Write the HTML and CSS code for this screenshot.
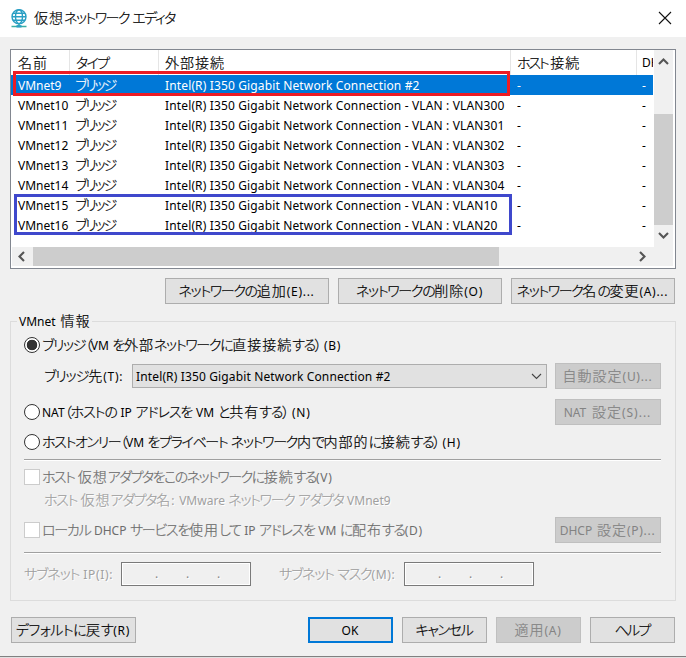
FILE: index.html
```html
<!DOCTYPE html>
<html lang="ja">
<head>
<meta charset="utf-8">
<title>仮想ネットワーク エディタ</title>
<link rel="stylesheet" href="styles.css">
</head>
<body>
<div class="window">
  <header class="titlebar">
    <svg class="app-icon" width="18" height="20" viewBox="0 0 18 20" fill="none" stroke="#2a9fc4" stroke-width="1.4"><circle cx="9" cy="7.700" r="7"/><ellipse cx="9" cy="7.700" rx="3.500" ry="7"/><path d="M2 7.700h14M3 4.200h12M3 11.200h12"/><path d="M9 15v3M1.500 17.500h15" stroke="#3aaea4" stroke-width="1.400"/><path d="M6.500 17.300h5" stroke="#2a9fc4" stroke-width="2.400"/></svg>
    <span class="t s15 title"><i>仮想</i>ネットワーク エディタ</span>
    <svg class="close" width="14" height="14" viewBox="0 0 14 14" stroke="#111" stroke-width="1.1"><path d="M1 1l12 12M13 1L1 13"/></svg>
  </header>
  <main class="body">
    <section class="list">
      <div class="table">
        <div class="row head"><span class="t"><i>名前</i></span><span class="t s17">タイプ</span><span class="t"><i>外部接続</i></span><span class="t s21">ホスト <i>接続</i></span><span>DH</span></div>
        <div class="row selected"><span>VMnet9</span><span class="t s21">ブリッジ</span><span class="wide">Intel(R) I350 Gigabit Network Connection #2</span><span>-</span><span>-</span></div>
        <div class="row"><span>VMnet10</span><span class="t s21">ブリッジ</span><span class="wide">Intel(R) I350 Gigabit Network Connection - VLAN : VLAN300</span><span>-</span><span>-</span></div>
        <div class="row"><span>VMnet11</span><span class="t s21">ブリッジ</span><span class="wide">Intel(R) I350 Gigabit Network Connection - VLAN : VLAN301</span><span>-</span><span>-</span></div>
        <div class="row"><span>VMnet12</span><span class="t s21">ブリッジ</span><span class="wide">Intel(R) I350 Gigabit Network Connection - VLAN : VLAN302</span><span>-</span><span>-</span></div>
        <div class="row"><span>VMnet13</span><span class="t s21">ブリッジ</span><span class="wide">Intel(R) I350 Gigabit Network Connection - VLAN : VLAN303</span><span>-</span><span>-</span></div>
        <div class="row"><span>VMnet14</span><span class="t s21">ブリッジ</span><span class="wide">Intel(R) I350 Gigabit Network Connection - VLAN : VLAN304</span><span>-</span><span>-</span></div>
        <div class="row"><span>VMnet15</span><span class="t s21">ブリッジ</span><span class="wide">Intel(R) I350 Gigabit Network Connection - VLAN : VLAN10</span><span>-</span><span>-</span></div>
        <div class="row"><span>VMnet16</span><span class="t s21">ブリッジ</span><span class="wide">Intel(R) I350 Gigabit Network Connection - VLAN : VLAN20</span><span>-</span><span>-</span></div>
      </div>
      <div class="vscroll">
        <svg width="19" height="24" viewBox="0 0 19 24" fill="none" stroke="#555" stroke-width="2.1"><path d="M5 14l4.500-4.500L14 14"/></svg>
        <div class="vthumb"></div>
        <svg width="19" height="22" viewBox="0 0 19 22" fill="none" stroke="#555" stroke-width="2.1"><path d="M5 8l4.500 4.500L14 8"/></svg>
      </div>
      <div class="hscroll">
        <svg width="21" height="19" viewBox="0 0 21 19" fill="none" stroke="#555" stroke-width="2.1"><path d="M12 5L7.500 9.500l4.500 4.500"/></svg>
        <div class="hthumb"></div>
        <svg width="21" height="19" viewBox="0 0 21 19" fill="none" stroke="#555" stroke-width="2.1"><path d="M8 5l4.500 4.500L8 14"/></svg>
      </div>
      <div class="mark red"></div>
      <div class="mark blue"></div>
    </section>

    <div class="actions">
      <button class="t s13">ネットワークの<i>追加</i><b class="p">(E)...</b></button>
      <button class="t s13">ネットワークの<i>削除</i><b class="p">(O)</b></button>
      <button class="t s14">ネットワーク<i>名</i>の<i>変更</i><b class="p">(A)...</b></button>
    </div>

    <section class="group">
      <div class="legend t"><b>VMnet</b> <i>情報</i></div>
      <div class="line radio-row"><span class="radio on"></span><span class="t s13">ブリッジ（<b>VM</b> を<i>外部</i>ネットワークに<i>直接接続</i>する） <b class="p">(B)</b></span></div>
      <div class="line bridge-row">
        <span class="t s10 bridge-label">ブリッジ<i>先</i><b class="p">(T):</b></span>
        <div class="combo"><span class="wide">Intel(R) I350 Gigabit Network Connection #2</span><svg width="11" height="7" viewBox="0 0 11 7" fill="none" stroke="#444" stroke-width="1.1"><path d="M1 1l4.500 4.500L10 1"/></svg></div>
        <button class="t off"><i>自動設定</i><b class="p">(U)...</b></button>
      </div>
      <div class="line nat-row"><span class="radio"></span><span class="t s10"><b>NAT</b>（ホストの <b>IP</b> アドレスを <b>VM</b> と<i>共有</i>する） <b class="p">(N)</b></span><button class="t off loose"><span><b>NAT</b> <i>設定</i><b class="p">(S)...</b></span></button></div>
      <div class="line host-row"><span class="radio"></span><span class="t s13">ホストオンリー（<b>VM</b> をプライベート ネットワーク<i>内</i>で<i>内部的</i>に<i>接続</i>する） <b class="p">(H)</b></span></div>
      <div class="rule"></div>
      <div class="line adapter-row dim"><span class="check"></span><span class="t s15">ホスト <i>仮想</i>アダプタをこのネットワークに<i>接続</i>する<b class="p">(V)</b></span></div>
      <div class="line name-row etched"><span class="t s13">ホスト <i>仮想</i>アダプタ<i>名</i><b>: VMware</b> ネットワーク アダプタ <b>VMnet9</b></span></div>
      <div class="line dhcp-row dim"><span class="check"></span><span class="t s12">ローカル <b>DHCP</b> サービスを<i>使用</i>して <b>IP</b> アドレスを <b>VM</b> に<i>配布</i>する<b class="p">(D)</b></span><button class="t off"><span><b>DHCP</b> <i>設定</i><b class="p">(P)...</b></span></button></div>
      <div class="rule"></div>
      <div class="line subnet-row etched">
        <span class="t s10 ip-label">サブネット <b class="p">IP(I):</b></span><div class="ip"><span>.</span><span>.</span><span>.</span></div>
        <span class="t s11 mask-label">サブネット マスク<b class="p">(M):</b></span><div class="ip"><span>.</span><span>.</span><span>.</span></div>
      </div>
    </section>

    <footer class="footer">
      <button class="t s05 reset">デフォルトに<i>戻</i>す<b class="p">(R)</b></button>
      <button class="t primary"><b>OK</b></button>
      <button class="t s13">キャンセル</button>
      <button class="t off"><i>適用</i><b class="p">(A)</b></button>
      <button class="t s17">ヘルプ</button>
    </footer>
  </main>
</div>
</body>
</html>
```
FILE: styles.css
```css
* { box-sizing: border-box; }
body { margin: 0; background: #fff; color: #000; font: 12px/20px "Noto Sans", "Noto Sans CJK JP", sans-serif; white-space: nowrap; }
svg { display: block; flex: none; }

/* Japanese runs use proportional kana; Latin runs sit in <b>, kanji runs in <i>. */
.t { font-family: "Noto Sans CJK JP", sans-serif; font-size: 14px; font-weight: 300; font-feature-settings: "palt"; word-spacing: 1.7px; -webkit-text-stroke: .2px; }
b { font-family: "Noto Sans", sans-serif; font-size: 12px; font-weight: 400; letter-spacing: 0; -webkit-text-stroke: 0; }
i { font-style: normal; letter-spacing: 1px; }
b.p { letter-spacing: .7px; }
.wide { letter-spacing: .14px; }
.s05 { letter-spacing: -.5px; }
.s10 { letter-spacing: -1.05px; }
.s11 { letter-spacing: -1.2px; }
.s12 { letter-spacing: -1.27px; }
.s13 { letter-spacing: -1.32px; }
.s14 { letter-spacing: -1.42px; }
.s15 { letter-spacing: -1.5px; }
.s17 { letter-spacing: -1.75px; }
.s21 { letter-spacing: -2.1px; }

.window { width: 686px; height: 658px; background: #f0f0f0; border-bottom: 1px solid #e0e0e0; display: flex; flex-direction: column; }
.titlebar { height: 37px; background: #fff; display: flex; align-items: center; padding: 0 14px 0 10px; }
.title { margin: -3px 0 0 6px; }
.close { margin: -1px 0 0 auto; }
.body { flex: 1; border-bottom: 1px solid #808080; padding: 12px 10px 0; }

.list { position: relative; width: 666px; height: 220px; border: 1px solid #828790; background: #fff; display: grid; grid-template: 197px 20px / 643px 20px; }
.table { overflow: hidden; width: 642px; }
.row { display: grid; grid-template-columns: 59px 89px 352px 126px 16px; height: 20px; line-height: 22px; }
.row > span { height: 20px; padding-left: 6px; }
.row > span:first-child { padding-left: 7px; }
.row > span:last-child { padding-left: 5px; }
.row > .t { line-height: 18px; padding-left: 5px; }
.row.head { height: 25px; line-height: 26px; }
.row.head > span { height: 25px; border-right: 1px solid #e5e5e5; }
.row.head > .t { line-height: 24px; padding-left: 6px; }
.row.head > .t:first-child { padding-left: 7px; }
.row.head > span:last-child { border: 0; }
.selected > span { background: #0078d7; color: #fff; }
.vscroll { width: 19px; background: #f0f0f0; display: flex; flex-direction: column; }
.vscroll svg:first-child { margin-bottom: 40px; }
.vthumb { height: 111px; background: #cdcdcd; }
.hscroll { grid-column: 1 / 3; height: 19px; margin: 0 1px; background: #f0f0f0; display: flex; }
.hthumb { width: 466px; background: #cdcdcd; }
.hscroll svg:last-child { margin-left: 133px; }
.mark { position: absolute; }
.red { left: 2px; top: 21px; width: 497px; height: 25px; border: 3px solid #ed1c24; }
.blue { left: 3px; top: 144px; width: 498px; height: 41px; border: 3px solid #3f48cc; }

button { height: 26px; padding: 0 1px 0 0; border: 1px solid #adadad; background: #e1e1e1; color: #000; line-height: 23px; display: flex; align-items: baseline; justify-content: center; white-space: pre; flex: none; }
.off { background: #ccc; border-color: #bfbfbf; color: #838383; }
.primary { border: 2px solid #0078d7; line-height: 23px; }
.actions { display: grid; grid-template-columns: 164px 164px 164px; gap: 9px; margin: 9px 1px 0 155px; }

.group { position: relative; margin-top: 17px; height: 280px; border: 1px solid #dcdcdc; padding: 11px 14px 0 13px; }
.legend { position: absolute; left: 6px; top: -12px; padding: 0 2px; background: #f0f0f0; }
.line { display: flex; align-items: center; }
.line button { width: 106px; margin-left: auto; }
.loose { word-spacing: 2.5px; }
.loose b.p { letter-spacing: 1px; }
.radio { width: 16px; height: 16px; border: 1px solid #333; border-radius: 50%; background: #fff; margin-right: 2px; flex: none; }
.on { background: radial-gradient(circle, #333 5px, #fff 5.6px); }
.check { width: 16px; height: 16px; border: 1px solid #ccc; background: #fff; margin-right: 2px; flex: none; }
.radio-row { height: 24px; }
.bridge-row { margin-top: 6px; height: 26px; }
.bridge-label { width: 108px; padding-left: 20px; }
.combo { width: 415px; height: 24px; border: 1px solid #adadad; background: #e1e1e1; display: flex; align-items: center; justify-content: space-between; padding: 1px 4px 0 3px; }
.nat-row { margin-top: 10px; height: 26px; }
.host-row { margin-top: 5px; height: 24px; }
.rule { height: 2px; border-top: 1px solid #a0a0a0; border-bottom: 1px solid #fff; }
.host-row + .rule { margin-top: 5px; }
.dim { color: #6d6d6d; }
.adapter-row { height: 24px; margin-top: 4px; }
.name-row { height: 18px; margin-top: 2px; padding-left: 20px; }
.etched { color: #a0a0a0; text-shadow: 1px 1px 0 #fff; }
.dhcp-row { height: 26px; margin-top: 8px; }
.dhcp-row + .rule { margin-top: 9px; }
.subnet-row { margin-top: 8px; height: 24px; }
.ip-label { width: 97px; }
.mask-label { width: 153px; padding-left: 28px; }
.ip { width: 130px; height: 24px; border: 1px solid #7a7a7a; box-shadow: inset 0 0 0 1px #fff; display: flex; padding: 1px 0 0 33px; color: #888; }
.ip span { width: 31px; }

.footer { display: flex; gap: 9px; margin: 16px 0 0 1px; }
.footer button { width: 85px; }
.footer .reset { width: 125px; margin-right: 163px; }
```
